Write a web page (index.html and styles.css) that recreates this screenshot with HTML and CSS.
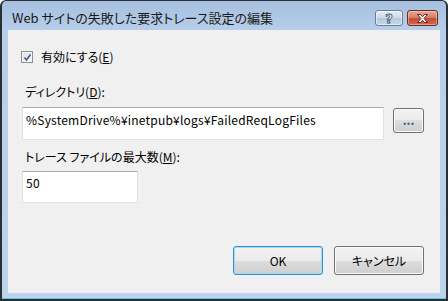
FILE: index.html
```html
<!DOCTYPE html>
<html lang="ja">
<head>
<meta charset="utf-8">
<link rel="stylesheet" href="styles.css">
</head>
<body>
<div class="window">
  <div class="titlebar">
    <span class="title">Web サイトの失敗した要求トレース設定の編集</span>
    <div class="caption-buttons">
      <div class="cap help"><span class="q">?</span></div>
      <div class="cap close">
        <svg width="15" height="11" viewBox="0 0 15 11">
          <path d="M2.5 1.5 L5.5 1.5 L7.5 3.8 L9.5 1.5 L12.5 1.5 L9 5.5 L12.5 9.5 L9.5 9.5 L7.5 7.2 L5.5 9.5 L2.5 9.5 L6 5.5 Z" fill="#ffffff" stroke="#5a2a22" stroke-width="1" stroke-linejoin="round"/>
        </svg>
      </div>
    </div>
  </div>
  <div class="client">
    <div class="check">
      <span class="box">
        <svg width="9" height="9" viewBox="0 0 9 9"><path d="M1.5 4.5 L3.5 7 L7.5 1.5" fill="none" stroke="#3a5a9a" stroke-width="1.6"/></svg>
      </span>
      <span class="check-label">有効にする(<u>E</u>)</span>
    </div>
    <div class="label label-dir">ディレクトリ(<u>D</u>):</div>
    <div class="row">
      <div class="textbox wide">%SystemDrive%¥inetpub¥logs¥FailedReqLogFiles</div>
      <div class="btn browse">...</div>
    </div>
    <div class="label label-max">トレース ファイルの最大数(<u>M</u>):</div>
    <div class="textbox small">50</div>
    <div class="footer">
      <div class="btn push default">OK</div>
      <div class="btn push">キャンセル</div>
    </div>
  </div>
</div>
</body>
</html>
```
FILE: styles.css
```css
* { box-sizing: border-box; }
html, body { margin: 0; padding: 0; background: #ffffff; }
body {
  font-family: "Noto Sans CJK JP", "Noto Sans", sans-serif;
  font-feature-settings: "palt";
  font-size: 12px;
  color: #000;
}
.window {
  width: 448px;
  height: 301px;
  border-style: solid;
  border-color: #2a2f36;
  border-width: 1px 2px 2px 2px;
  border-radius: 6px 6px 0 0;
  background: linear-gradient(#a6c0df 0px, #b7cfea 30px, #bcd4ee 100%);
  box-shadow: inset 0 -1px 0 #5cc3e6;
  padding: 0 6px 6px 6px;
  display: flex;
  flex-direction: column;
}
.titlebar {
  height: 29px;
  display: flex;
  align-items: flex-start;
  justify-content: space-between;
  padding: 0 2px 0 4px;
}
.title {
  font-size: 13px;
  line-height: 18px;
  margin-top: 8px;
  color: #1a1a1a;
}
.caption-buttons {
  display: flex;
  gap: 4px;
  margin-top: 9px;
}
.cap {
  height: 16px;
  border-radius: 3px;
  display: flex;
  align-items: center;
  justify-content: center;
}
.help {
  width: 28px;
  border: 1px solid #6c7f95;
  background: linear-gradient(#e4edf7 0%, #cbdbec 48%, #b3c8e0 52%, #c6d8ec 100%);
  box-shadow: inset 0 0 0 1px rgba(255,255,255,0.5);
}
.q {
  font-family: "DejaVu Sans", sans-serif;
  font-weight: bold;
  font-size: 13px;
  line-height: 13px;
  color: #ffffff;
  -webkit-text-stroke: 0.8px #3d4f66;
}
.close {
  width: 31px;
  border: 1px solid #6b2c22;
  background: linear-gradient(#e8a796 0%, #d8806b 45%, #c24c32 55%, #d26a4e 100%);
  box-shadow: inset 0 0 0 1px rgba(255,220,210,0.45);
}
.client {
  flex: 1;
  background: #f0f0f0;
  padding: 19px 16px 0 14px;
  display: flex;
  flex-direction: column;
}
.check {
  display: flex;
  align-items: center;
  height: 16px;
}
.box {
  width: 12px;
  height: 12px;
  margin-left: -1px;
  border: 1px solid #8e8f8f;
  background: linear-gradient(135deg, #dcdcdc, #fbfbfb);
  box-shadow: inset 0 0 0 1px #f4f4f4;
  display: flex;
  align-items: center;
  justify-content: center;
}
.check-label {
  margin-left: 8px;
  line-height: 16px;
}
.label {
  line-height: 16px;
  padding-left: 3px;
}
.label-dir { margin-top: 19px; }
.label-max { margin-top: 9px; }
.row {
  display: flex;
  align-items: flex-start;
  margin-top: 7px;
}
.textbox {
  background: #ffffff;
  border: 1px solid #dfe3e8;
  border-top-color: #abadb3;
  line-height: 16px;
  padding: 4px 3px 0 3px;
  white-space: nowrap;
  letter-spacing: 0.22px;
}
.wide {
  width: 363px;
  height: 33px;
}
.small {
  width: 116px;
  height: 32px;
  margin-top: 6px;
  padding-top: 3px;
}
.btn {
  border: 1px solid #707070;
  border-radius: 3px;
  background: linear-gradient(#f2f2f2 0%, #ebebeb 50%, #dddddd 50%, #cfcfcf 100%);
  box-shadow: inset 0 0 0 1px #fbfbfb;
  display: flex;
  align-items: center;
  justify-content: center;
}
.browse {
  width: 31px;
  height: 25px;
  margin-left: 9px;
  margin-top: 1px;
  color: #1d4e8a;
  font-weight: bold;
  line-height: 12px;
  padding-bottom: 2px;
}
.footer {
  display: flex;
  justify-content: flex-end;
  gap: 11px;
  margin-top: 43px;
}
.push {
  width: 90px;
  height: 29px;
}
.default {
  border-color: #3c8dc6;
  box-shadow: inset 0 0 0 1px #9fdcf7;
}
```
